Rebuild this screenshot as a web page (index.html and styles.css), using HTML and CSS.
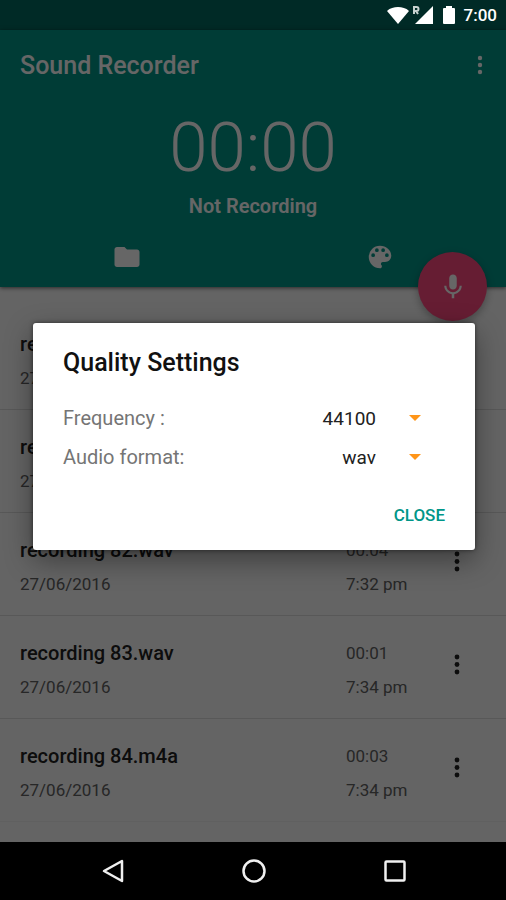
FILE: index.html
```html
<!DOCTYPE html>
<html lang="en">
<head>
  <meta charset="utf-8">
  <meta name="viewport" content="width=device-width, initial-scale=1">
  <title>Sound Recorder</title>
  <link rel="stylesheet" href="styles.css">
</head>
<body>
  <div class="screen">
    <div class="status">
      <svg class="status-wifi" viewBox="0 0 24 18" width="24" height="18" aria-hidden="true"><path d="M1 5C4 2 8 1 12 1s8 1 11 4L12 18z"/></svg>
      <svg class="status-signal" viewBox="0 0 22 20" width="22" height="20" aria-hidden="true"><path d="M21 1v18H3z"/><path class="roaming" d="M2 9V2h2.500a1.500 1.500 0 0 1 0 4H2m2 0 2 3"/></svg>
      <svg class="status-battery" viewBox="0 0 14 20" width="14" height="20" aria-hidden="true"><path d="M4 1h6v2h2q1 0 1 1v14q0 1-1 1H2q-1 0-1-1V4q0-1 1-1h2z"/></svg>
      <time class="clock">7:00</time>
    </div>

    <div class="app">
      <header class="header">
        <div class="toolbar">
          <h1 class="title">Sound Recorder</h1>
          <button class="icon-button" type="button" aria-label="More options">
            <svg viewBox="0 0 6 22" width="6" height="22"><circle cx="3" cy="4" r="2.200"/><circle cx="3" cy="11" r="2.200"/><circle cx="3" cy="18" r="2.200"/></svg>
          </button>
        </div>
        <div class="timer">00:00</div>
        <p class="state">Not Recording</p>
        <div class="actions">
          <button class="icon-button" type="button" aria-label="Open folder">
            <svg viewBox="0 0 24 24" width="30" height="30"><path d="M10 4H4c-1.100 0-2 .9-2 2v12c0 1.100.9 2 2 2h16c1.100 0 2-.9 2-2V8c0-1.100-.9-2-2-2h-8z"/></svg>
          </button>
          <button class="icon-button" type="button" aria-label="Change theme">
            <svg viewBox="0 0 24 24" width="30" height="30"><path d="M12 3a9 9 0 0 0 0 18c.83 0 1.500-.67 1.500-1.500 0-.39-.15-.74-.39-1.010-.23-.26-.38-.61-.38-.99 0-.83.67-1.500 1.500-1.500H16c2.760 0 5-2.240 5-5 0-4.420-4.030-8-9-8zm-5.500 9a1.500 1.500 0 1 1 0-3 1.500 1.500 0 0 1 0 3zm3-4a1.500 1.500 0 1 1 0-3 1.500 1.500 0 0 1 0 3zm5 0a1.500 1.500 0 1 1 0-3 1.500 1.500 0 0 1 0 3zm3 4a1.500 1.500 0 1 1 0-3 1.500 1.500 0 0 1 0 3z"/></svg>
          </button>
        </div>
        <button class="record" type="button" aria-label="Record">
          <svg viewBox="0 0 24 24" width="30" height="30"><path d="M12 14c1.660 0 2.990-1.340 2.990-3L15 5c0-1.660-1.340-3-3-3S9 3.340 9 5v6c0 1.660 1.340 3 3 3zm5.300-3c0 3-2.540 5.100-5.300 5.100S6.700 14 6.700 11H5c0 3.410 2.720 6.230 6 6.720V21h2v-3.280c3.280-.48 6-3.300 6-6.720z"/></svg>
        </button>
      </header>

      <ul class="list">
        <li class="row">
          <span class="name">recording 80.wav</span><span class="meta">00:02</span>
          <span class="meta">27/06/2016</span><span class="meta">7:30 pm</span>
          <button class="icon-button row-menu" type="button" aria-label="Options for recording 80"><svg viewBox="0 0 6 22" width="6" height="22"><circle cx="3" cy="3" r="2.400"/><circle cx="3" cy="10.500" r="2.400"/><circle cx="3" cy="18" r="2.400"/></svg></button>
        </li>
        <li class="row">
          <span class="name">recording 81.wav</span><span class="meta">00:03</span>
          <span class="meta">27/06/2016</span><span class="meta">7:31 pm</span>
          <button class="icon-button row-menu" type="button" aria-label="Options for recording 81"><svg viewBox="0 0 6 22" width="6" height="22"><circle cx="3" cy="3" r="2.400"/><circle cx="3" cy="10.500" r="2.400"/><circle cx="3" cy="18" r="2.400"/></svg></button>
        </li>
        <li class="row">
          <span class="name">recording 82.wav</span><span class="meta">00:04</span>
          <span class="meta">27/06/2016</span><span class="meta">7:32 pm</span>
          <button class="icon-button row-menu" type="button" aria-label="Options for recording 82"><svg viewBox="0 0 6 22" width="6" height="22"><circle cx="3" cy="3" r="2.400"/><circle cx="3" cy="10.500" r="2.400"/><circle cx="3" cy="18" r="2.400"/></svg></button>
        </li>
        <li class="row">
          <span class="name">recording 83.wav</span><span class="meta">00:01</span>
          <span class="meta">27/06/2016</span><span class="meta">7:34 pm</span>
          <button class="icon-button row-menu" type="button" aria-label="Options for recording 83"><svg viewBox="0 0 6 22" width="6" height="22"><circle cx="3" cy="3" r="2.400"/><circle cx="3" cy="10.500" r="2.400"/><circle cx="3" cy="18" r="2.400"/></svg></button>
        </li>
        <li class="row">
          <span class="name">recording 84.m4a</span><span class="meta">00:03</span>
          <span class="meta">27/06/2016</span><span class="meta">7:34 pm</span>
          <button class="icon-button row-menu" type="button" aria-label="Options for recording 84"><svg viewBox="0 0 6 22" width="6" height="22"><circle cx="3" cy="3" r="2.400"/><circle cx="3" cy="10.500" r="2.400"/><circle cx="3" cy="18" r="2.400"/></svg></button>
        </li>
      </ul>

      <div class="scrim">
        <section class="dialog" role="dialog" aria-labelledby="dialog-title">
          <h2 class="dialog-title" id="dialog-title">Quality Settings</h2>
          <div class="field">
            <label for="frequency">Frequency :</label>
            <span class="picker">
              <select id="frequency"><option>44100</option></select>
              <svg viewBox="0 0 12 6" width="12" height="6" aria-hidden="true"><path d="M0 0h12L6 6z"/></svg>
            </span>
          </div>
          <div class="field">
            <label for="format">Audio format:</label>
            <span class="picker">
              <select id="format"><option>wav</option></select>
              <svg viewBox="0 0 12 6" width="12" height="6" aria-hidden="true"><path d="M0 0h12L6 6z"/></svg>
            </span>
          </div>
          <div class="dialog-actions"><button class="close" type="button">CLOSE</button></div>
        </section>
      </div>
    </div>

    <nav class="nav">
      <button type="button" aria-label="Back"><svg viewBox="0 0 24 24" width="24" height="24"><path d="M21 2v20L3 12z"/></svg></button>
      <button type="button" aria-label="Home"><svg viewBox="0 0 24 24" width="24" height="24"><circle cx="12" cy="12" r="10.500"/></svg></button>
      <button type="button" aria-label="Recent apps"><svg viewBox="0 0 24 24" width="24" height="24"><rect x="2.500" y="2.500" width="19" height="19" rx="1"/></svg></button>
    </nav>
  </div>
</body>
</html>
```
FILE: styles.css
```css
* {
  box-sizing: border-box;
}

body {
  margin: 0;
  background: #000;
  font-family: Roboto, "Liberation Sans", sans-serif;
}

h1,
h2,
p,
ul {
  margin: 0;
  padding: 0;
}

button,
select {
  margin: 0;
  padding: 0;
  border: 0;
  background: none;
  color: inherit;
  font: inherit;
}

svg {
  display: block;
  fill: currentColor;
}

.screen {
  display: flex;
  flex-direction: column;
  min-height: 100vh;
}

/* System bars */
.status {
  display: flex;
  align-items: center;
  justify-content: flex-end;
  height: 30px;
  padding-right: 9px;
  background: #002a26;
  color: #fff;
}

.status-signal {
  margin-left: 2px;
}

.status-battery {
  margin: 0 8px;
}

.roaming {
  fill: none;
  stroke: #c8d2d0;
  stroke-width: 2;
}

.clock {
  font-size: 17px;
  font-weight: 500;
}

.nav {
  display: flex;
  justify-content: center;
  height: 58px;
  padding-left: 2px;
  background: #000;
  color: #f0f0f0;
}

.nav button {
  display: grid;
  place-items: center;
  width: 28%;
}

.nav svg {
  fill: none;
  stroke: currentColor;
  stroke-width: 2.5;
  stroke-linejoin: round;
}

/* Recorder */
.app {
  position: relative;
  flex: 1;
  background: #fafafa;
}

.header {
  position: relative;
  background: #009688;
  box-shadow: 0 1px 4px rgba(0, 0, 0, 0.6);
  color: #fff;
  text-align: center;
}

.toolbar {
  display: flex;
  align-items: center;
  justify-content: space-between;
  height: 70px;
  padding: 0 14px 0 20px;
}

.title {
  font-size: 25px;
  font-weight: 500;
}

.icon-button {
  display: grid;
  place-items: center;
  min-width: 24px;
}

.timer {
  padding-top: 4px;
  font-size: 69px;
  font-weight: 300;
  line-height: 88px;
}

.state {
  font-size: 20px;
  font-weight: 600;
  line-height: 28px;
}

.actions {
  display: grid;
  grid-template-columns: 1fr 1fr;
  height: 67px;
  padding-bottom: 1px;
  padding-top: 8px;
}

.record {
  position: absolute;
  right: 19px;
  bottom: -34px;
  display: grid;
  place-items: center;
  width: 69px;
  height: 69px;
  border-radius: 50%;
  background: #ff4a80;
  box-shadow: 0 3px 8px rgba(0, 0, 0, 0.3);
}

.list {
  padding-top: 20px;
  list-style: none;
}

.row {
  display: grid;
  grid-template-columns: 1fr 99px 24px;
  grid-template-rows: 34px 34px;
  align-items: center;
  height: 103px;
  padding: 20px 37px 14px 20px;
  border-bottom: 1px solid #dcdcdc;
}

.row:last-child {
  border-color: #f0f0f0;
}

.name {
  color: #212121;
  font-size: 20px;
  font-weight: 500;
}

.meta {
  color: #616161;
  font-size: 17px;
}

.row-menu {
  grid-area: 1 / 3 / 3 / 4;
  margin-top: -11px;
  color: #212121;
}

/* Quality settings dialog */
.scrim {
  position: absolute;
  inset: 0;
  display: flex;
  align-items: center;
  padding: 0 31px 0 33px;
  background: rgba(0, 0, 0, 0.6);
}

.dialog {
  flex: 1;
  padding: 24px 30px 16px;
  border-radius: 3px;
  background: #fff;
  box-shadow: 0 10px 28px rgba(0, 0, 0, 0.4), 0 0 4px rgba(0, 0, 0, 0.5);
  color: #212121;
}

.dialog-title {
  margin-bottom: 20px;
  color: #111;
  font-size: 25px;
  font-weight: 500;
  line-height: 32px;
}

.field {
  display: flex;
  align-items: center;
  justify-content: space-between;
  height: 39px;
  color: #757575;
  font-size: 20px;
}

.picker {
  position: relative;
  color: #ff9518;
  font-size: 19px;
}

.picker select {
  appearance: none;
  width: 140px;
  height: 38px;
  padding-right: 69px;
  color: #212121;
  text-align-last: right;
}

.picker svg {
  position: absolute;
  top: 16px;
  right: 24px;
  pointer-events: none;
}

.dialog-actions {
  display: flex;
  justify-content: flex-end;
  padding-top: 20px;
  padding-bottom: 1px;
}

.close {
  height: 36px;
  color: #009688;
  font-size: 17px;
  font-weight: 500;
}
```
